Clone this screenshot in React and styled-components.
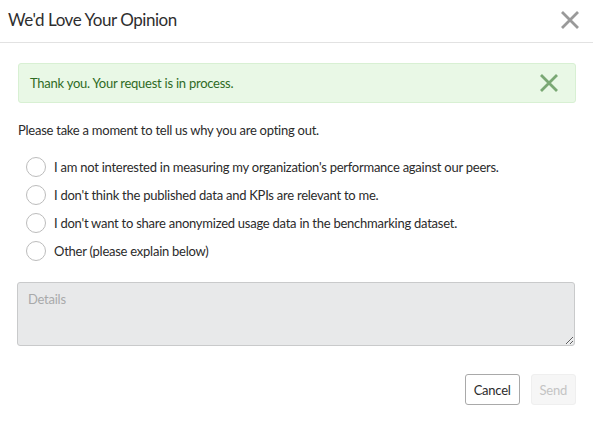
import React from 'react'
import styled, { createGlobalStyle } from 'styled-components'

const GlobalStyle = createGlobalStyle`
    html, body {
        margin: 0;
        background: #fff;
    }
    body {
        font-family: Lato, "Noto Sans", sans-serif;
        font-size: 13px;
        letter-spacing: -0.25px;
        color: #2b2b2b;
    }
`;

const Modal = styled.div`
    width: 593px;
    height: 425px;
    background: #fff;
    box-sizing: border-box;
`;

const Header = styled.div`
    height: 43px;
    box-sizing: border-box;
    display: flex;
    align-items: center;
    justify-content: space-between;
    padding: 0 13px 3px 8px;
    border-bottom: 1px solid #e2e2e2;
`;

const Title = styled.h1`
    margin: 0;
    font-size: 17px;
    font-weight: 400;
    letter-spacing: -0.45px;
    color: #2e2e2e;
`;

const CloseButton = styled.button`
    border: 0;
    background: none;
    padding: 0;
    display: flex;
    cursor: pointer;
`;

const Body = styled.div`
    padding: 20px 17px 0 18px;
`;

const Alert = styled.div`
    height: 40px;
    box-sizing: border-box;
    display: flex;
    align-items: center;
    justify-content: space-between;
    padding: 0 16px 0 11px;
    background: #e9f8e6;
    border: 1px solid #d8f0d3;
    border-radius: 3px;
    color: #2f6b25;
`;

const Prompt = styled.p`
    margin: 19px 0 0;
`;

const Options = styled.div`
    display: flex;
    flex-direction: column;
    gap: 8px;
    margin-top: 19px;
    padding-left: 8px;
`;

const Option = styled.label`
    display: flex;
    align-items: center;
    gap: 8px;
    height: 20px;
    cursor: pointer;
`;

const Radio = styled.input.attrs({ type: 'radio' })`
    appearance: none;
    margin: 0;
    width: 20px;
    height: 20px;
    border: 1px solid #bcbcbc;
    border-radius: 50%;
    background: #fff;
`;

const Details = styled.textarea`
    display: block;
    width: 100%;
    height: 64px;
    box-sizing: border-box;
    margin-top: 21px;
    margin-left: -1px;
    padding: 8px 10px;
    background: #e8e9ea;
    border: 1px solid #c9cacb;
    border-radius: 3px;
    font-family: inherit;
    font-size: 13px;
    letter-spacing: -0.25px;
    color: #333;

    &::placeholder {
        color: #a8a9aa;
    }
`;

const Footer = styled.div`
    display: flex;
    justify-content: flex-end;
    gap: 11px;
    margin-top: 28px;
`;

const Button = styled.button`
    height: 31px;
    padding: 0 8px;
    font-family: inherit;
    font-size: 13px;
    letter-spacing: -0.25px;
    border-radius: 3px;
    border: 1px solid ${p => (p.disabled ? '#efefef' : '#a9a9a9')};
    background: ${p => (p.disabled ? '#f6f6f6' : '#fff')};
    color: ${p => (p.disabled ? '#c4c4c4' : '#2b2b2b')};
`;

const CrossIcon = ({ size, color, width }) => (
    <svg width={size} height={size} viewBox="0 0 20 20">
        <path d="M2 2 L18 18 M18 2 L2 18" stroke={color} strokeWidth={width} />
    </svg>
);

const reasons = [
    "I am not interested in measuring my organization's performance against our peers.",
    "I don't think the published data and KPIs are relevant to me.",
    "I don't want to share anonymized usage data in the benchmarking dataset.",
    "Other (please explain below)",
];

const App = () => {
    return (
        <Modal>
            <GlobalStyle />
            <Header>
                <Title>We'd Love Your Opinion</Title>
                <CloseButton>
                    <CrossIcon size={20} color="#9a9a9a" width={2.8} />
                </CloseButton>
            </Header>

            <Body>
                <Alert>
                    <span>Thank you. Your request is in process.</span>
                    <CrossIcon size={20} color="#7aa874" width={2.8} />
                </Alert>

                <Prompt>Please take a moment to tell us why you are opting out.</Prompt>

                <Options>
                    {reasons.map((r, i) => (
                        <Option key={i}>
                            <Radio name="reason" />
                            {r}
                        </Option>
                    ))}
                </Options>

                <Details placeholder="Details" />

                <Footer>
                    <Button>Cancel</Button>
                    <Button disabled>Send</Button>
                </Footer>
            </Body>
        </Modal>
    )
}

export default App
